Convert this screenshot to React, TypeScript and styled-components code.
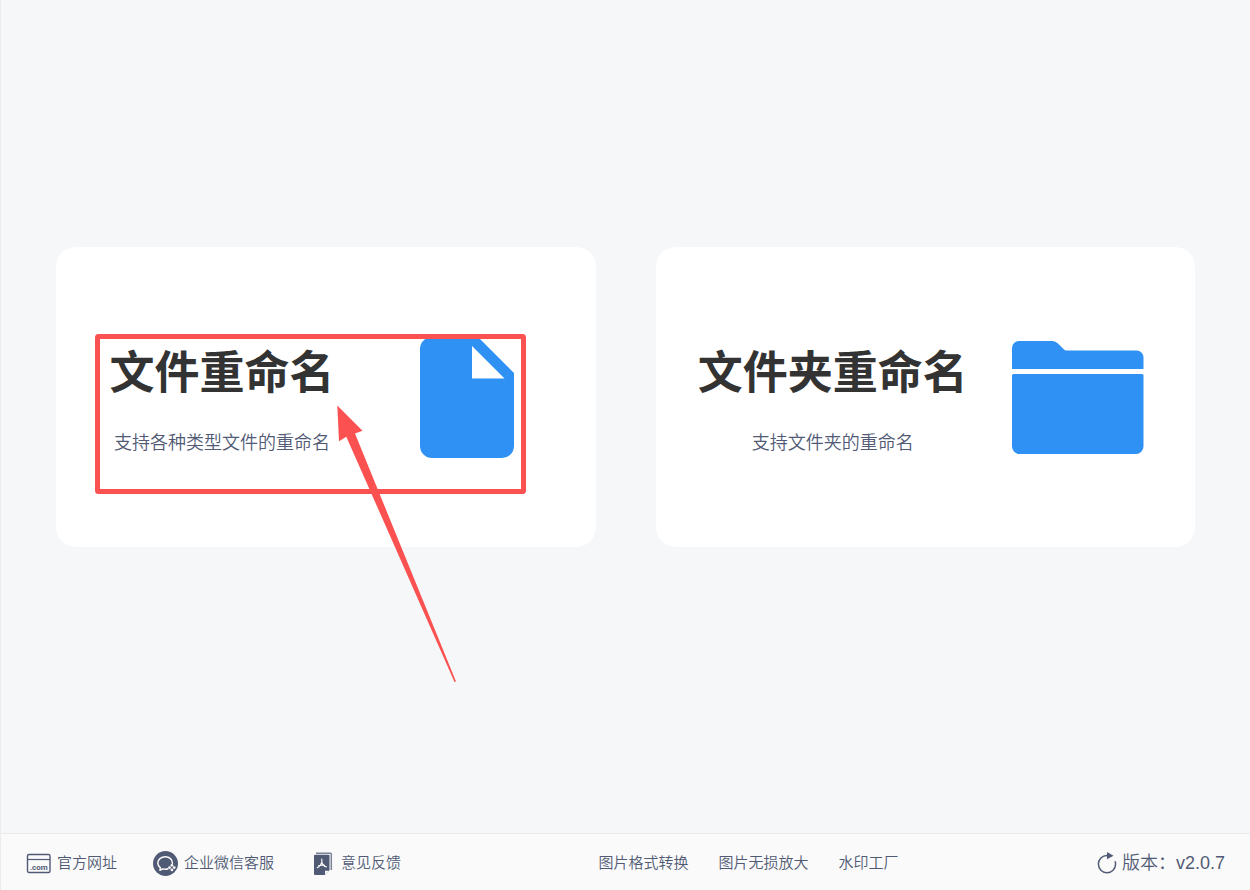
import React from 'react';
import styled, { createGlobalStyle } from 'styled-components';

const ink = '#515a75';
const blue = '#3091f5';
const red = '#fb5151';

const GlobalStyle = createGlobalStyle`
  *, *::before, *::after { box-sizing: border-box; }
  body {
    margin: 0;
    background: #f5f7f9;
    font-family: "Liberation Sans", "Noto Sans CJK SC", sans-serif;
    font-weight: 350;
    color: ${ink};
  }
`;

const Page = styled.div`
  display: flex;
  flex-direction: column;
  min-height: 100vh;
  border-left: 1px solid #ebecee;
`;

const Main = styled.main`
  flex: 1;
  display: grid;
  grid-template-columns: repeat(auto-fit, minmax(460px, 1fr));
  align-content: center;
  gap: 60px;
  padding: 0 55px 40px;
`;

const CardSlot = styled.div`
  position: relative;
`;

const Card = styled.button`
  display: flex;
  align-items: center;
  justify-content: space-around;
  width: 100%;
  min-height: 300px;
  padding: 0 25px;
  border: 0;
  border-radius: 20px;
  background: #fff;
  color: inherit;
  font: inherit;
  cursor: pointer;
`;

const CardText = styled.span`
  display: flex;
  flex-direction: column;
  align-items: center;
  gap: 27px;
  padding-top: 5px;
`;

const CardTitle = styled.span`
  font-size: 45px;
  font-weight: 700;
  line-height: 60px;
  color: #333;
`;

const CardNote = styled.span`
  font-size: 18px;
  line-height: 24px;
`;

const CardIcon = styled.svg`
  flex: none;
  width: 150px;
  height: 150px;
  fill: ${blue};
`;

const Marker = styled.svg`
  position: absolute;
  top: 0;
  left: 0;
  width: 500px;
  height: 450px;
  pointer-events: none;
`;

const Footer = styled.footer`
  display: flex;
  flex-wrap: wrap;
  align-items: center;
  justify-content: space-between;
  min-height: 57px;
  padding: 2px 25px 0;
  border-top: 1px solid #e9eaec;
  background: #fafafa;
`;

const LinkGroup = styled.nav<{ $gap: number }>`
  display: flex;
  align-items: center;
  gap: ${({ $gap }) => $gap}px;
`;

const FooterLink = styled.a`
  display: flex;
  align-items: center;
  gap: 6px;
  color: inherit;
  font-size: 15px;
  line-height: 24px;
  text-decoration: none;
`;

const Version = styled.button`
  display: flex;
  align-items: center;
  gap: 4px;
  padding: 0;
  border: 0;
  background: none;
  color: inherit;
  font: inherit;
  font-size: 18px;
  line-height: 24px;
  cursor: pointer;
`;

const SmallIcon = styled.svg<{ $size?: number }>`
  flex: none;
  width: ${({ $size = 25 }) => $size}px;
  height: ${({ $size = 25 }) => $size}px;
`;

const FileIcon = () => (
  <CardIcon viewBox="0 0 150 150" aria-hidden="true">
    <path
      fillRule="evenodd"
      d="M40 15H86L122 51V124A12 12 0 0 1 110 136H40A12 12 0 0 1 28 124V27A12 12 0 0 1 40 15ZM80 24V56.500H112.500Z"
    />
  </CardIcon>
);

const FolderIcon = () => (
  <CardIcon viewBox="0 0 150 150" aria-hidden="true">
    <path d="M9 47V26A7 7 0 0 1 16 19H49.500Q52.500 19 55 21.500L60.500 27Q62 28.500 63.500 28.500H133.500A7 7 0 0 1 140.500 36V47Z" />
    <path d="M10.500 52H139A1.500 1.500 0 0 1 140.500 53.500V124.500A7.500 7.500 0 0 1 133 132H16.500A7.500 7.500 0 0 1 9 124.500V53.500A1.500 1.500 0 0 1 10.500 52Z" />
  </CardIcon>
);

const SiteIcon = () => (
  <SmallIcon viewBox="0 0 25 25" fill="none" stroke={ink} aria-hidden="true">
    <rect x="1.500" y="3.500" width="22.500" height="18" rx="1.500" strokeWidth="1.400" />
    <path d="M1.500 8.500H24" strokeWidth="1.200" />
    <text
      x="12.700"
      y="19"
      textAnchor="middle"
      fontFamily="Roboto, sans-serif"
      fontSize="8"
      fontWeight="700"
      fill={ink}
      stroke="none"
    >
      .com
    </text>
  </SmallIcon>
);

const ChatIcon = () => (
  <SmallIcon viewBox="0 0 25 25" aria-hidden="true">
    <circle cx="12.500" cy="12.500" r="12.500" fill={ink} />
    <path
      d="M19.400 12.400C19.600 8.400 16.500 5.800 12.300 5.800C8 5.800 4.800 8.500 4.800 12C4.800 14 5.800 15.700 7.400 16.800L6.900 19.200L9.800 17.900C11.500 18.400 13.500 18.400 15 17.800"
      fill="none"
      stroke="#fafafa"
      strokeWidth="1.500"
      strokeLinejoin="round"
      strokeLinecap="round"
    />
    <g fill="#fafafa">
      <circle cx="18.900" cy="14.300" r="1.400" />
      <circle cx="18.900" cy="18.900" r="1.400" />
      <circle cx="16.600" cy="16.600" r="1.400" />
      <circle cx="21.200" cy="16.600" r="1.400" />
    </g>
  </SmallIcon>
);

const FeedbackIcon = () => (
  <SmallIcon viewBox="0 0 25 25" fill="none" aria-hidden="true">
    <path
      d="M6 2.200H20.500Q21.300 2.200 21.300 3V19"
      stroke={ink}
      strokeOpacity="0.750"
      strokeWidth="1.500"
    />
    <path
      d="M5 3.800H18.500Q19.500 3.800 19.500 4.800V19.200L14.600 24H5Q4 24 4 23V4.800Q4 3.800 5 3.800Z"
      fill={ink}
    />
    <path d="M15 19.700H19L15 23.500Z" fill="#fafafa" />
    <path
      d="M11.800 8C12.300 10 11.800 12 10.500 14C9.500 15.700 8.500 16.500 7.300 16.700M11.800 11.500C12.800 14.100 14.300 15.500 16.300 15.800M8.600 14.800C10.500 14 12.500 13.800 14.500 14.400"
      stroke="#fafafa"
      strokeWidth="1.200"
      strokeLinecap="round"
    />
  </SmallIcon>
);

const RefreshIcon = () => (
  <SmallIcon $size={22} viewBox="0 0 22 22" fill="none" aria-hidden="true">
    <path
      d="M12 3.500H11A8.600 8.600 0 1 0 19.600 12.100Q19.600 10.500 19 9.200"
      stroke={ink}
      strokeWidth="1.500"
    />
    <path d="M11 0L17.500 3.800L11 7.200Z" fill={ink} />
  </SmallIcon>
);

const ClickMarker = () => (
  <Marker viewBox="0 0 500 450" aria-hidden="true">
    <rect x="41.500" y="89.500" width="426" height="155" rx="1" fill="none" stroke={red} strokeWidth="5" />
    <path
      d="M281.300 158.500L306.500 183.700L299 186.500L400 434.500L398.500 435L290.300 189.700L283 194.200Z"
      fill={red}
    />
  </Marker>
);

const modes = [
  { title: '文件重命名', note: '支持各种类型文件的重命名', Icon: FileIcon, marked: true },
  { title: '文件夹重命名', note: '支持文件夹的重命名', Icon: FolderIcon, marked: false },
];

const supportLinks = [
  { label: '官方网址', Icon: SiteIcon },
  { label: '企业微信客服', Icon: ChatIcon },
  { label: '意见反馈', Icon: FeedbackIcon },
];

const productLinks = ['图片格式转换', '图片无损放大', '水印工厂'];

export default function App() {
  return (
    <>
      <GlobalStyle />
      <Page lang="zh-CN">
        <Main>
          {modes.map(({ title, note, Icon, marked }) => (
            <CardSlot key={title}>
              <Card type="button">
                <CardText>
                  <CardTitle>{title}</CardTitle>
                  <CardNote>{note}</CardNote>
                </CardText>
                <Icon />
              </Card>
              {marked && <ClickMarker />}
            </CardSlot>
          ))}
        </Main>
        <Footer>
          <LinkGroup $gap={36}>
            {supportLinks.map(({ label, Icon }) => (
              <FooterLink key={label} href="#">
                <Icon />
                {label}
              </FooterLink>
            ))}
          </LinkGroup>
          <LinkGroup $gap={30}>
            {productLinks.map((label) => (
              <FooterLink key={label} href="#">
                {label}
              </FooterLink>
            ))}
          </LinkGroup>
          <Version type="button">
            <RefreshIcon />
            版本：v2.0.7
          </Version>
        </Footer>
      </Page>
    </>
  );
}
